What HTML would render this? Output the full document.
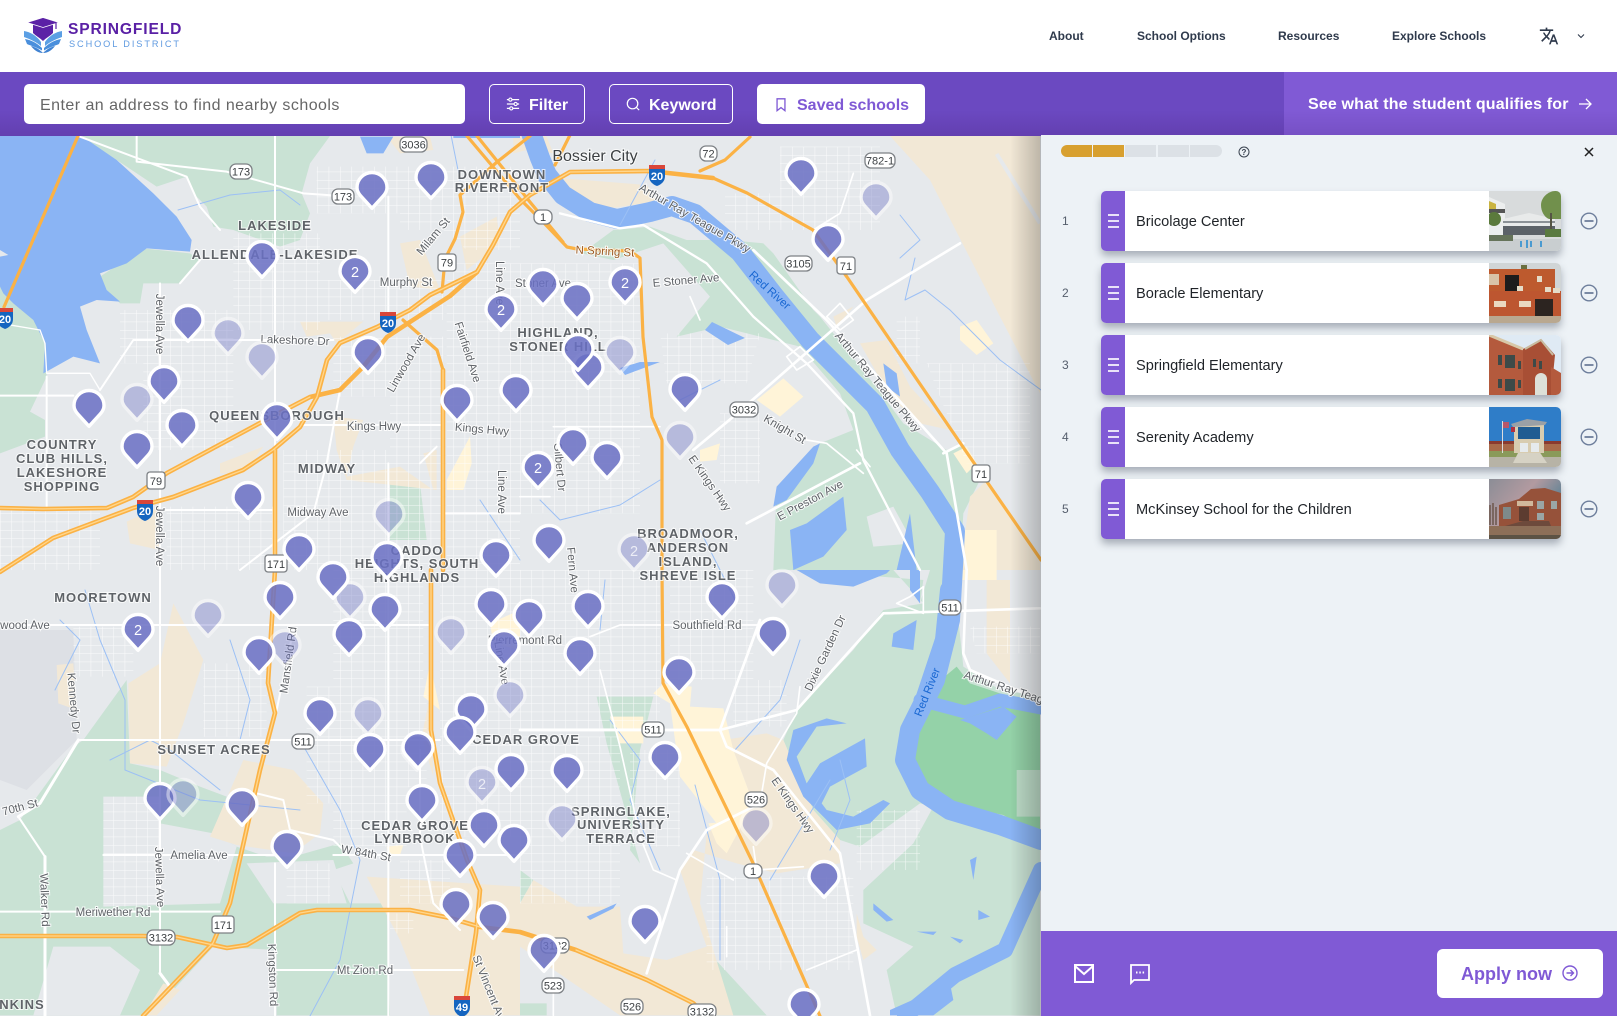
<!DOCTYPE html>
<html lang="en"><head><meta charset="utf-8"><title>Springfield School District</title>
<style>
*{box-sizing:border-box}
html,body{margin:0;padding:0}
body{width:1617px;height:1016px;overflow:hidden;position:relative;background:#fff;font-family:"Liberation Sans",sans-serif}
.abs{position:absolute}
.nav{position:absolute;top:29px;font-size:12px;font-weight:bold;color:#2f3a4c;line-height:14px;white-space:nowrap}
.tb{position:absolute;left:0;top:72px;width:1617px;height:64px;background:linear-gradient(#6b49c1 60%,#633fb0)}
.btn{position:absolute;top:12px;height:40px;border:1px solid #fff;border-radius:5px;color:#fff;font-size:16px;font-weight:bold;line-height:41px;white-space:nowrap}
.btn svg{position:absolute;top:12px}
.btn span{position:absolute;top:0}
.card{position:absolute;left:1101px;width:460px;height:60px;background:#fff;border-radius:5px;box-shadow:0 5px 8px rgba(55,65,85,.38)}
.card .h{position:absolute;left:0;top:0;width:24px;height:60px;background:#805ad5;border-radius:5px 0 0 5px}
.card .h i{position:absolute;left:7px;width:11px;height:1.6px;background:#e9e2f8}
.card .t{position:absolute;left:35px;top:1px;line-height:60px;font-size:14.6px;color:#1f2328;white-space:nowrap}
.card svg.im{position:absolute;left:388px;top:0;width:72px;height:60px;border-radius:0 5px 5px 0}
.num{position:absolute;left:1062px;font-size:12px;color:#555e6c;line-height:14px}
.mi{position:absolute;left:1580px}
.pl{font:bold 13px "Liberation Sans",sans-serif;letter-spacing:1px;fill:#5f6368;text-anchor:middle;paint-order:stroke;stroke:rgba(255,255,255,.75);stroke-width:2px}
.rl{font:11.5px "Liberation Sans",sans-serif;fill:#5f6368;text-anchor:middle;paint-order:stroke;stroke:rgba(255,255,255,.85);stroke-width:2px}
.sh{font:11px "Liberation Sans",sans-serif;fill:#3c4043;text-anchor:middle}
.sr{fill:#fff;stroke:#7d8185;stroke-width:1.3}
.it{font:bold 11px "Liberation Sans",sans-serif;fill:#fff;text-anchor:middle}
.f{opacity:.45}
.n{font:14.5px "Liberation Sans",sans-serif;fill:#fff;text-anchor:middle}
.nf{font:14.5px "Liberation Sans",sans-serif;fill:#fff;text-anchor:middle;opacity:.75}
</style></head><body>

<!-- map -->
<svg class="abs" style="left:0;top:135px" width="1041" height="881" viewBox="0 135 1041 881" xmlns="http://www.w3.org/2000/svg">
<defs>
<pattern id="g" patternUnits="userSpaceOnUse" width="34" height="25"><path d="M0 0H34M0 0V25" stroke="#fff" stroke-width="3.2" fill="none" opacity=".95"/></pattern>
<path id="p" d="M0 18.3L-11.2 6C-13.5 3.5-15-.0-15-2.5A15 15 0 0 1 15-2.5C15 0 13.500 3.5 11.2 6Z" fill="#6a70c4" fill-opacity=".86" stroke="#fff" stroke-width="3.4" stroke-linejoin="round"/>
<linearGradient id="sd" x1="0" x2="1" y1="0" y2="0"><stop offset="0" stop-color="#000" stop-opacity="0"/><stop offset="1" stop-color="#000" stop-opacity=".22"/></linearGradient>
</defs>
<rect x="0" y="135" width="1041" height="881" fill="#e6e9ec"/>

<!-- Q1 fills -->
<g transform="translate(0,130) scale(.33333)">
<path fill="#c9e2d4" d="M240 18L990 18 930 100 905 190 930 250 900 330 840 350 700 300 640 290 620 230 580 190 560 140 470 170 350 90Z"/>
<path fill="#c9e2d4" d="M300 440L430 355 570 370 600 390 540 460 430 460 420 520 360 520 320 480Z"/>
<path fill="#c9e2d4" d="M0 470L60 515 130 600 140 740 90 845 135 870 135 920 0 970Z"/>
<path fill="#c9e2d4" d="M1170 1050L1260 1060 1280 1230 1170 1230Z"/>
<path fill="#f2e8d6" d="M900 575L1090 575 1010 640 990 610 920 620ZM1000 860L1090 870 1060 950 1040 1040 1200 1010 1300 1080 1270 970 1310 960 1310 1080 1040 1050 1010 960ZM380 1175L480 1130 480 1260 390 1240ZM660 1000L790 950 730 1030 660 1030ZM1200 340L1260 330 1320 480 1230 470ZM1380 320L1490 260 1500 340 1400 420Z"/>
<path fill="#fff4d8" d="M1340 1050L1410 920 1415 1000 1390 1080 1340 1080Z"/>
<path fill="#f2e8d6" d="M1160 20L1290 20 1300 60 1200 70Z"/>
<path fill="url(#g)" d="M360 540H700V960H430V700H360ZM700 310H960V600H700ZM950 110H1200V250H950ZM840 450H1330V570H840ZM1000 620H1330V960H1170V800H1000ZM1200 110H1560V360H1400L1330 300H1200ZM1340 400H1560V1320H1340ZM0 1140H300V1320H0ZM500 1130H830V1320H500ZM850 960H1330V1320H850Z" opacity=".85"/>
</g>

<!-- Q2 fills -->
<g transform="translate(520,130) scale(.33333)">
<path fill="#f2e8d6" d="M1110 18H1560V790L1440 560 1230 150Z"/>
<path fill="none" stroke="#e6e9ec" stroke-width="12" d="M1430 72L1560 280"/>
<path fill="#f2e8d6" d="M130 145L380 165 410 215 230 240 150 190ZM0 30L80 20 100 70 40 60ZM-20 -10L90 -10 60 50 -20 70Z"/>
<path fill="#c9e2d4" d="M185 370L280 300 390 290 500 330 620 330 730 340 760 370 880 540 900 560 1060 760 1150 880 1280 960 1330 940 1380 1050 1330 1150 1320 1320H760L770 1070 900 940 1000 900 960 790 840 650 600 590 470 620 570 500 430 340 280 390Z"/>
<path fill="#e6e9ec" d="M800 680L880 730 930 880 760 850 720 790Z"/>
<path fill="#e6e9ec" d="M1040 1160L1120 1130 1180 1240 1060 1250Z"/>
<path fill="#f2e8d6" d="M940 560L1000 530 950 590ZM1020 640L1100 630 1170 770 1290 900 1200 880 1110 800ZM1350 1100L1400 1050 1560 1290V1320H1320Z"/>
<path fill="#fff4d8" d="M1320 590L1370 570 1420 640 1370 675 1320 630ZM710 810L790 745 850 800 780 860ZM1300 970L1340 950 1370 1000 1340 1030ZM1330 1200L1430 1200 1430 1320H1340ZM540 960L600 940 590 990 540 995Z"/>
<path fill="url(#g)" d="M0 400H360V1150H0ZM615 190H800V300H615ZM780 50H1080V300H780ZM1130 560H1200V700H1130ZM1220 700H1530V1000H1340ZM420 610H720L680 760H440ZM230 850H360V1060H130ZM600 850H720V1060H600Z" opacity=".85"/>
</g>

<!-- Q3 fills -->
<g transform="translate(0,570) scale(.33333)">
<path fill="#dde0e5" d="M0 180H220L230 510 80 660 0 630Z"/>
<path fill="#c9e2d4" d="M0 780L60 750 220 530 250 510 380 330 390 580 480 600 600 650 680 680 640 790 710 830 800 860 880 860 1020 820 1060 880 1000 900 1050 1000 1160 1000 1170 1336H0Z"/>
<path fill="#e6e9ec" d="M310 680H480V830H310ZM480 760L640 790 710 830 660 1000 310 1010V830H480ZM160 1130L330 1130 420 1200 360 1336H100ZM640 1130L830 1140 830 1336H450Z"/>
<path fill="#e6e9ec" d="M740 880L1000 870 1040 1000 820 1000Z"/>
<path fill="#f2e8d6" d="M385 340L480 280 520 100 610 270 550 460 500 590 390 580ZM630 800L730 570 880 600 970 700 960 790 880 850 710 825ZM170 285L220 280 230 420 175 400ZM1100 920L1560 950V1336H1290L1200 1110ZM430 1336L490 1240 540 1260 470 1336ZM1290 380L1300 620 1265 500Z"/>
<path fill="#fff4d8" d="M1470 160L1560 120V240L1480 220ZM1290 280L1320 420 1270 380ZM1160 830L1210 825 1200 855 1165 855Z"/>
<path fill="url(#g)" d="M220 170H400V320H220ZM1000 0H1270V480H1000ZM920 350H1280V640L1000 700H920ZM1000 620H1220V830H1000ZM1320 0H1560V800H1320ZM310 680H480V1010H310ZM610 280H800V500H610ZM860 880H990V1000H860ZM1200 870H1350V1000H1200ZM1170 1030H1240V1090H1170Z" opacity=".85"/>
</g>

<!-- Q4 fills -->
<g transform="translate(520,570) scale(.33333)">
<path fill="#c9e2d4" d="M830 0L1120 0 1210 100 1090 120 1000 240 830 420 790 510 880 720 960 810 1020 830 1200 700 1240 710 1180 820 1030 960 1030 1060 1180 1130 1100 1200 1130 1336H1560V380L1440 360 1330 290 1310 100 1320 0 1230 0 1200 100 1210 30ZM230 380L400 380 360 540 330 840 360 880 310 700 260 520Z"/>
<path fill="#c9e2d4" d="M0 900L40 930 0 1000ZM400 1190L560 1140 740 1336H480ZM0 1300H80V1336H0Z"/>
<path fill="#f2e8d6" d="M0 1000L40 930 170 1010 300 1010 310 1150 440 1170 560 1130 480 900 520 840 650 880 770 910 960 880 960 810 880 720 790 510 740 490 610 510 640 540 700 700 560 790 540 1000 580 1140 640 1336H300L0 1130Z"/>
<path fill="#f2e8d6" d="M1010 1030L1030 1100 1070 1140 1030 1170 1010 1100ZM1400 30H1470L1470 340 1400 250Z"/>
<path fill="#fff4d8" d="M400 370L430 340 515 350 510 410 610 415 640 540 700 700 620 850 590 760 480 620 450 400ZM270 440H370V520H300ZM1310 0H1430V30H1320ZM565 760L620 755 620 850 590 820Z"/>
<path fill="#94d2a8" d="M1200 410L1250 340 1310 290 1350 340 1440 370 1560 420V800L1450 735 1280 700 1190 620 1150 550Z"/>
<path fill="#bddcc8" d="M1490 600H1560V740H1490Z"/>
<path fill="url(#g)" d="M0 0H420V480H0ZM450 0H700V330H450ZM0 500H300V1000H0ZM560 920H1000V1200H560ZM640 330H800V470H640ZM1010 720H1200V900H1010ZM1350 170H1560V250H1370ZM330 540H480V830H330Z" opacity=".85"/>
</g>

<!-- water -->
<g fill="#8ab4f4">
<g transform="translate(0,130) scale(.33333)">
<path d="M0 18H245L350 90 460 190 530 260 575 330 570 365 440 355 380 400 300 430 320 480 360 515 290 510 240 530 260 600 300 700 220 680 130 730 135 640 100 570 40 520 10 490 0 470 0 380 25 375 0 360Z"/>
<path d="M1080 20H1180L1150 70 1100 70ZM1360 18H1560V24H1360Z"/>
</g>
<g transform="translate(520,570) scale(.33333)">
<path d="M820 480L800 570 850 680 950 780 1050 760 1110 700 1090 690 1000 740 920 720 905 700 930 650 1040 590 1035 505 900 580 860 640 830 560 890 470 980 460 920 445Z"/>
<path d="M830 0L900 40 1000 50 1100 10 1110 0ZM1170 0L1200 0 1200 100 1170 60ZM1120 190L1190 150 1180 240 1115 230ZM1320 450L1450 410 1490 440 1430 510 1400 490 1350 460ZM1060 1000L1120 1050 1100 1055 1060 1020ZM1350 870L1370 860 1360 930ZM1190 1085L1250 1085 1240 1095ZM1375 1020L1410 1040 1375 1050ZM1290 1100L1330 1110 1320 1120ZM200 1040L290 1000 280 1015 210 1050ZM1110 1320L1290 1240 1300 1290 1240 1336H1110Z"/>
</g>
<g transform="translate(520,130) scale(.33333)">
<path d="M760 1130L770 1070 880 950 900 940 880 1000 800 1110ZM860 1180L970 1100 980 1200 910 1280 820 1320 810 1200ZM1130 1320L1170 1150 1190 1320ZM1090 700L1130 730 1140 800 1100 770Z"/>
</g>
<path d="M705 330L712 322 745 338 728 345ZM620 368L640 362 660 362 625 375Z"/>
</g>
<g fill="none" stroke="#8ab4f4" stroke-linecap="round" stroke-linejoin="round">
<path stroke-width="20" d="M530 130L540 158 547 175 563 195 590 212 617 219 650 212 672 206 695 214 740 252 775 297 810 340 845 375 875 405 900 450 930 492 955 531 950 620 935 680 910 730 905 760 920 790 950 810 1000 825 1041 840"/>
<path stroke-width="20" d="M950 590L945 640 925 700"/>
<path stroke-width="16" d="M1041 870L1005 950 955 975 905 1016"/>
<path stroke-width="13" d="M1041 708L1000 700 965 712 920 700"/>
<path stroke-width="1" stroke="#9cc0f5" d="M178 210L230 195 280 190 300 205M620 225L655 160M900 258L920 240 900 215M915 258L905 300 925 290 950 310 1000 360 1041 390M450 130L460 180M720 380L680 400M700 530L720 570 735 600M800 640L780 700 735 750M610 720L640 760 630 800 660 870M695 785L720 880 720 960M55 690L80 640 60 620M110 760L150 740 170 750 220 790M85 590L100 640 125 700 125 770 200 800 300 810M230 640L250 700 240 740M300 740L340 810 360 860 340 960 310 1016M540 500L560 520 620 505 660 480M770 880L830 780M605 580L600 630M480 500L520 560M840 760L850 800 830 850"/>
</g>

<!-- white roads -->
<g fill="none" stroke="#fff" stroke-linecap="round" stroke-linejoin="round">
<g transform="translate(0,130) scale(.33333)" stroke-width="6">
<path d="M410 18V95L680 125 910 190 1050 200M825 18V960M240 20L560 140 600 230 660 300M0 797H220M140 740V1130M480 460V1320M300 780L400 630H1000M540 460L600 390M1165 1000V1320M1330 1150H1560M900 885H1320M480 1140H820M1165 200V560M1020 780L980 1000 940 1150 720 1320M1260 1000L1310 950"/>
<path d="M0 580L120 600 135 640 140 730 270 730 300 780" stroke-width="4"/>
</g>
<g transform="translate(520,130) scale(.33333)">
<path stroke-width="7" d="M120 250L300 295 370 285 560 400 700 560 860 700 1000 850 1030 990 1200 1320"/>
<path stroke-width="8" d="M700 360L920 570 1280 970 1340 1320M520 960L640 860 1040 510 1320 340M680 1180L1020 1000M1270 970L1330 940"/>
<path stroke-width="5" d="M920 560L960 520 1000 570 960 600ZM800 680L840 650 880 690 830 720ZM510 500L540 570M1010 960L1050 1010M860 930L920 940 1030 1030M100 890H420M0 1100H90M1000 130L960 250 880 300"/>
</g>
<g transform="translate(0,570) scale(.33333)">
<path stroke-width="6" d="M0 165H1290M235 510H1320M480 0V1210L510 1250M55 740L135 860V1336M825 880V1336M0 1025H660M310 855H830M1000 855H1560M830 1200H1390M1165 0V1336M1260 540V800L1300 1000 1380 1080M770 670L850 690 870 780 1000 810 1040 850M880 180L830 420"/>
<path stroke-width="9" d="M235 510L120 700 55 740M135 860V1336M480 1210L510 1250"/>
</g>
<g transform="translate(520,570) scale(.33333)">
<path stroke-width="8" d="M720 150L600 480 620 530 760 600 960 850 1050 1336M0 480H600L830 420 1090 130 1560 115M1340 0L1330 250 1350 300 1560 390M380 1210L480 900 560 780 700 710"/>
<path stroke-width="5" d="M840 350L830 430 740 580 720 700M210 200L300 165H720M240 300L300 530 360 800 400 900 470 930M860 1200L1010 1140M500 850L640 930M700 830L710 900 850 890M620 1070V1160M100 1150V1336M1130 100L1210 130V50L1170 80Z"/>
</g>
</g>

<!-- highways -->
<g fill="none" stroke-linecap="round" stroke-linejoin="round">
<g stroke="#fbb245" stroke-width="3.2">
<path d="M78 136L4 307"/>
<path d="M713 178L747 193 813 230 847 277 963 447 1041 560"/>
<path d="M577 249L630 251 640 258 643 337 652 417 662 440 662 570 663 683 687 727 753 863 820 1016"/>
<path d="M530 136L497 162 460 195 463 212 455 239 445 259 442 292"/>
<path d="M467 136L520 199 543 222 567 247 577 249M477 136L530 202 563 242M555 165L570 135M700 171L725 160 750 137"/>
<path d="M403 320L437 350 443 370"/>
</g>
<g stroke="#fbb245" stroke-width="4.6">
<path d="M0 572L53 538 133 508 173 497 243 470 273 450 300 427 317 397 327 360 340 343 377 327 410 310 430 295 477 272 493 245 510 212 530 195 570 172 650 171 713 178"/>
<path d="M0 508L43 509 107 508 133 497 167 473 260 423 310 397 340 390 363 367 387 337 413 320 450 296 477 272"/>
<path d="M275 450V570L268 683 275 713 260 770 230 903 213 943 143 1016"/>
<path d="M443 370V570M431 570V730L440 783 467 860 480 890 476 933 463 1016"/>
<path d="M0 936H143L177 937 227 948 247 945 300 913 317 910H410L450 918 480 927 520 932 576 950 647 980 693 1003 707 1016"/>
</g>
<g stroke="#ffd78e" stroke-width="1.3">
<path d="M0 572L53 538 133 508 173 497 243 470 273 450 300 427 317 397 327 360 340 343 377 327 410 310 430 295 477 272 493 245 510 212 530 195 570 172 650 171M275 450V570L268 683 275 713 260 770 230 903 213 943 143 1016M443 370V570M431 570V730L440 783 467 860 480 890 476 933 463 1016M0 936H143L177 937 227 948 247 945 300 913 317 910H410L450 918 480 927M576 950L647 980 693 1003M0 508L43 509 107 508 133 497 167 473 260 423 310 397"/>
</g>
</g>

<!-- labels -->
<g>
<text class="pl" x="275" y="230">LAKESIDE</text>
<text class="pl" x="275" y="259">ALLENDALE-LAKESIDE</text>
<text class="pl" x="502" y="179">DOWNTOWN</text>
<text class="pl" x="502" y="192">RIVERFRONT</text>
<text class="pl" x="62" y="449">COUNTRY</text>
<text class="pl" x="62" y="463">CLUB HILLS,</text>
<text class="pl" x="62" y="477">LAKESHORE</text>
<text class="pl" x="62" y="491">SHOPPING</text>
<text class="pl" x="277" y="420">QUEENSBOROUGH</text>
<text class="pl" x="327" y="473">MIDWAY</text>
<text class="pl" x="417" y="555">CADDO</text>
<text class="pl" x="417" y="568">HEIGHTS, SOUTH</text>
<text class="pl" x="417" y="582">HIGHLANDS</text>
<text class="pl" x="558" y="337">HIGHLAND,</text>
<text class="pl" x="558" y="351">STONER HILL</text>
<text class="pl" x="688" y="538">BROADMOOR,</text>
<text class="pl" x="688" y="552">ANDERSON</text>
<text class="pl" x="688" y="566">ISLAND,</text>
<text class="pl" x="688" y="580">SHREVE ISLE</text>
<text class="pl" x="103" y="602">MOORETOWN</text>
<text class="pl" x="214" y="754">SUNSET ACRES</text>
<text class="pl" x="526" y="744">CEDAR GROVE</text>
<text class="pl" x="415" y="830">CEDAR GROVE</text>
<text class="pl" x="415" y="843">LYNBROOK</text>
<text class="pl" x="621" y="816">SPRINGLAKE,</text>
<text class="pl" x="621" y="829">UNIVERSITY</text>
<text class="pl" x="621" y="843">TERRACE</text>
<text class="pl" x="22" y="1009">NKINS</text>
<text x="595" y="161" style="font:16px 'Liberation Sans',sans-serif;fill:#3c4043;text-anchor:middle;paint-order:stroke;stroke:rgba(255,255,255,.8);stroke-width:2px">Bossier City</text>

<text class="rl" x="406" y="286">Murphy St</text>
<text class="rl" x="295" y="344" transform="rotate(2 295 340)">Lakeshore Dr</text>
<text class="rl" x="374" y="430">Kings Hwy</text>
<text class="rl" x="482" y="433" transform="rotate(5 482 429)">Kings Hwy</text>
<text class="rl" x="318" y="516">Midway Ave</text>
<text class="rl" x="160" y="328" transform="rotate(90 160 324)">Jewella Ave</text>
<text class="rl" x="160" y="540" transform="rotate(90 160 536)">Jewella Ave</text>
<text class="rl" x="406" y="367" transform="rotate(-60 406 363)">Linwood Ave</text>
<text class="rl" x="468" y="356" transform="rotate(72 468 352)">Fairfield Ave</text>
<text class="rl" x="500" y="287" transform="rotate(90 500 283)">Line Ave</text>
<text class="rl" x="502" y="496" transform="rotate(90 502 492)">Line Ave</text>
<text class="rl" x="433" y="240" transform="rotate(-50 433 236)">Milam St</text>
<text class="rl" x="605" y="255" transform="rotate(3 605 251)" style="fill:#9c5a22">N Spring St</text>
<text class="rl" x="686" y="284" transform="rotate(-5 686 280)">E Stoner Ave</text>
<text class="rl" x="543" y="287">Stoner Ave</text>
<text class="rl" x="695" y="222" transform="rotate(30 695 218)">Arthur Ray Teague Pkwy</text>
<text class="rl" x="878" y="386" transform="rotate(50 878 382)">Arthur Ray Teague Pkwy</text>
<text class="rl" x="770" y="294" transform="rotate(42 770 290)" style="fill:#1967d2;stroke:none">Red River</text>
<text class="rl" x="785" y="433" transform="rotate(30 785 429)">Knight St</text>
<text class="rl" x="710" y="487" transform="rotate(55 710 483)">E Kings Hwy</text>
<text class="rl" x="810" y="504" transform="rotate(-28 810 500)">E Preston Ave</text>
<text class="rl" x="560" y="471" transform="rotate(85 560 467)">Gilbert Dr</text>
<text class="rl" x="573" y="574" transform="rotate(85 573 570)">Fern Ave</text>
<text class="rl" x="25" y="629">wood Ave</text>
<text class="rl" x="74" y="707" transform="rotate(85 74 703)">Kennedy Dr</text>
<text class="rl" x="160" y="881" transform="rotate(88 160 877)">Jewella Ave</text>
<text class="rl" x="45" y="904" transform="rotate(88 45 900)">Walker Rd</text>
<text class="rl" x="20" y="811" transform="rotate(-15 20 807)">70th St</text>
<text class="rl" x="199" y="859">Amelia Ave</text>
<text class="rl" x="113" y="916">Meriwether Rd</text>
<text class="rl" x="288" y="664" transform="rotate(-82 288 660)">Mansfield Rd</text>
<text class="rl" x="366" y="857" transform="rotate(10 366 853)">W 84th St</text>
<text class="rl" x="273" y="979" transform="rotate(88 273 975)">Kingston Rd</text>
<text class="rl" x="365" y="974">Mt Zion Rd</text>
<text class="rl" x="490" y="994" transform="rotate(68 490 990)">St Vincent Ave</text>
<text class="rl" x="525" y="644">Pierremont Rd</text>
<text class="rl" x="502" y="667" transform="rotate(80 502 663)">Line Ave</text>
<text class="rl" x="707" y="629">Southfield Rd</text>
<text class="rl" x="825" y="657" transform="rotate(-65 825 653)">Dixie Garden Dr</text>
<text class="rl" x="793" y="809" transform="rotate(55 793 805)">E Kings Hwy</text>
<text class="rl" x="927" y="696" transform="rotate(-68 927 692)" style="fill:#1967d2;stroke:none">Red River</text>
<text class="rl" x="1010" y="692" transform="rotate(18 1007 688)">Arthur Ray Teague</text>
</g>

<!-- shields -->
<g>
<rect class="sr" x="400" y="137" width="27" height="15" rx="6"/><text class="sh" x="413.500" y="148.500">3036</text>
<rect class="sr" x="230" y="164" width="22" height="15" rx="6"/><text class="sh" x="241" y="175.500">173</text>
<rect class="sr" x="332" y="189" width="22" height="15" rx="6"/><text class="sh" x="343" y="200.500">173</text>
<rect class="sr" x="438" y="254" width="18" height="17" rx="3"/><text class="sh" x="447" y="266.500">79</text>
<rect class="sr" x="147" y="472" width="18" height="17" rx="3"/><text class="sh" x="156" y="485">79</text>
<rect class="sr" x="265" y="555" width="22" height="17" rx="3"/><text class="sh" x="276" y="568">171</text>
<rect class="sr" x="700" y="146" width="17" height="15" rx="6"/><text class="sh" x="708.500" y="157.500">72</text>
<rect class="sr" x="865" y="153" width="30" height="15" rx="6"/><text class="sh" x="880" y="164.500">782-1</text>
<rect class="sr" x="534" y="210" width="18" height="14" rx="6"/><text class="sh" x="543" y="221">1</text>
<rect class="sr" x="785" y="256" width="27" height="15" rx="6"/><text class="sh" x="798.500" y="267.500">3105</text>
<rect class="sr" x="837" y="257" width="18" height="17" rx="3"/><text class="sh" x="846" y="270">71</text>
<rect class="sr" x="730" y="402" width="28" height="15" rx="6"/><text class="sh" x="744" y="413.500">3032</text>
<rect class="sr" x="972" y="465" width="18" height="17" rx="3"/><text class="sh" x="981" y="478">71</text>
<rect class="sr" x="292" y="734" width="22" height="15" rx="6"/><text class="sh" x="303" y="745.500">511</text>
<rect class="sr" x="147" y="930" width="28" height="15" rx="6"/><text class="sh" x="161" y="941.500">3132</text>
<rect class="sr" x="212" y="916" width="22" height="17" rx="3"/><text class="sh" x="223" y="929">171</text>
<rect class="sr" x="642" y="722" width="22" height="15" rx="6"/><text class="sh" x="653" y="733.500">511</text>
<rect class="sr" x="745" y="792" width="22" height="15" rx="6"/><text class="sh" x="756" y="803.500">526</text>
<rect class="sr" x="744" y="864" width="18" height="14" rx="6"/><text class="sh" x="753" y="875">1</text>
<rect class="sr" x="939" y="600" width="22" height="15" rx="6"/><text class="sh" x="950" y="611.500">511</text>
<rect class="sr" x="542" y="978" width="22" height="15" rx="6"/><text class="sh" x="553" y="989.500">523</text>
<rect class="sr" x="621" y="999" width="22" height="15" rx="6"/><text class="sh" x="632" y="1010.500">526</text>
<rect class="sr" x="688" y="1004" width="28" height="15" rx="6"/><text class="sh" x="702" y="1015.500">3132</text>
<rect class="sr" x="541" y="938" width="28" height="15" rx="6"/><text class="sh" x="555" y="949.500">3132</text>
<path fill="#1565c0" d="M380 313H396L396 323Q396 330 388 333 380 330 380 323Z"/><rect x="380" y="312" width="16" height="4" fill="#d9463a"/><text class="it" x="388" y="327">20</text>
<path fill="#1565c0" d="M-3 309H13L13 319Q13 326 5 329-3 326-3 319Z"/><rect x="-3" y="308" width="16" height="4" fill="#d9463a"/><text class="it" x="5" y="323">20</text>
<path fill="#1565c0" d="M137 501H153L153 511Q153 518 145 521 137 518 137 511Z"/><rect x="137" y="500" width="16" height="4" fill="#d9463a"/><text class="it" x="145" y="515">20</text>
<path fill="#1565c0" d="M649 166H665L665 176Q665 183 657 186 649 183 649 176Z"/><rect x="649" y="165" width="16" height="4" fill="#d9463a"/><text class="it" x="657" y="180">20</text>
<path fill="#1565c0" d="M454 997H470L470 1007Q470 1014 462 1017 454 1014 454 1007Z"/><rect x="454" y="996" width="16" height="4" fill="#d9463a"/><text class="it" x="462" y="1011">49</text>
</g>

<!-- pins -->
<g>
<use href="#p" x="372" y="190"/><use href="#p" x="431" y="180"/><use href="#p" x="262" y="259"/>
<use href="#p" x="355" y="274"/><text class="n" x="355" y="277">2</text>
<use href="#p" x="188" y="323"/><use href="#p" x="228" y="336" class="f"/><use href="#p" x="262" y="360" class="f"/>
<use href="#p" x="368" y="355"/><use href="#p" x="164" y="384"/><use href="#p" x="137" y="402" class="f"/>
<use href="#p" x="89" y="408"/><use href="#p" x="182" y="428"/><use href="#p" x="277" y="421"/><use href="#p" x="137" y="449"/>
<use href="#p" x="457" y="403"/><use href="#p" x="248" y="500"/><use href="#p" x="389" y="517" class="f"/>
<use href="#p" x="299" y="552"/><use href="#p" x="387" y="560"/><use href="#p" x="496" y="558"/>
<use href="#p" x="501" y="312"/><text class="n" x="501" y="315">2</text>
<use href="#p" x="516" y="393"/>
<use href="#p" x="801" y="176"/><use href="#p" x="876" y="200" class="f"/><use href="#p" x="828" y="242"/>
<use href="#p" x="543" y="287"/><use href="#p" x="577" y="301"/>
<use href="#p" x="625" y="285"/><text class="n" x="625" y="288">2</text>
<use href="#p" x="588" y="370"/><use href="#p" x="620" y="355" class="f"/><use href="#p" x="578" y="352"/>
<use href="#p" x="685" y="392"/><use href="#p" x="680" y="440" class="f"/><use href="#p" x="573" y="446"/><use href="#p" x="607" y="460"/>
<use href="#p" x="538" y="470"/><text class="n" x="538" y="473">2</text>
<use href="#p" x="549" y="543"/>
<use href="#p" x="634" y="552" class="f"/><text class="nf" x="634" y="556">2</text>
<use href="#p" x="350" y="600" class="f"/><use href="#p" x="333" y="580"/>
<use href="#p" x="280" y="600"/><use href="#p" x="385" y="612"/><use href="#p" x="491" y="607"/>
<use href="#p" x="138" y="632"/><text class="n" x="138" y="635">2</text>
<use href="#p" x="208" y="618" class="f"/><use href="#p" x="285" y="648" class="f"/><use href="#p" x="259" y="655"/>
<use href="#p" x="349" y="637"/><use href="#p" x="451" y="635" class="f"/><use href="#p" x="504" y="648"/>
<use href="#p" x="529" y="618"/><use href="#p" x="588" y="609"/><use href="#p" x="722" y="600"/><use href="#p" x="782" y="588" class="f"/>
<use href="#p" x="580" y="656"/><use href="#p" x="773" y="636"/><use href="#p" x="679" y="675"/>
<use href="#p" x="510" y="698" class="f"/>
<use href="#p" x="320" y="716"/><use href="#p" x="368" y="716" class="f"/><use href="#p" x="471" y="712"/><use href="#p" x="460" y="735"/>
<use href="#p" x="370" y="752"/><use href="#p" x="417" y="752" class="f"/><use href="#p" x="418" y="750"/>
<use href="#p" x="665" y="760"/><use href="#p" x="567" y="773"/><use href="#p" x="511" y="772"/>
<use href="#p" x="482" y="785" class="f"/><text class="nf" x="482" y="789">2</text>
<use href="#p" x="160" y="801"/><use href="#p" x="183" y="797" class="f"/><use href="#p" x="242" y="807"/>
<use href="#p" x="422" y="803"/><use href="#p" x="562" y="822" class="f"/><use href="#p" x="756" y="826" class="f"/>
<use href="#p" x="484" y="828"/><use href="#p" x="514" y="843"/><use href="#p" x="287" y="849"/><use href="#p" x="460" y="858"/>
<use href="#p" x="824" y="879"/><use href="#p" x="456" y="907"/><use href="#p" x="493" y="920"/><use href="#p" x="645" y="924"/>
<use href="#p" x="544" y="953"/><use href="#p" x="804" y="1007"/>
</g>
<rect x="1010" y="135" width="31" height="881" fill="url(#sd)"/>
</svg>

<!-- header -->
<div class="abs" style="left:0;top:0;width:1617px;height:72px;background:#fff"></div>
<svg class="abs" style="left:22px;top:15px" width="42" height="40" viewBox="0 0 42 40">
<path fill="#5b9fe4" d="M2 16C8 17 14 20 19 27L19 31C13 26 7 24 2 22Z"/>
<path fill="#4a8fdc" d="M3 24C9 25 15 28 20 33L20 35.500C14 32 8 30.500 5 29Z"/>
<path fill="#3f82d2" d="M9 31C13 32 17 34 21 38 16 38 12 35 9 31Z"/>
<path fill="#5b9fe4" d="M40 16C34 17 28 20 23 27L23 31C29 26 35 24 40 22Z"/>
<path fill="#4a8fdc" d="M39 24C33 25 27 28 22 33L22 35.500C28 32 34 30.500 37 29Z"/>
<path fill="#3f82d2" d="M33 31C29 32 25 34 21 38 26 38 30 35 33 31Z"/>
<path fill="#5b21a6" d="M11 9V18C14 21 18 23 21 26 24 23 28 21 31 18V9Z"/>
<path fill="#5b21a6" stroke="#fff" stroke-width=".8" d="M21 2.500L37 7.500 21 12.500 5 7.500Z"/>
<path stroke="#5b21a6" stroke-width="1.200" d="M34 8V14"/>
</svg>
<div class="abs" style="left:68px;top:21px;font-size:15.6px;font-weight:bold;letter-spacing:.85px;color:#5a20a5;line-height:18px;white-space:nowrap">SPRINGFIELD</div>
<div class="abs" style="left:69px;top:39px;font-size:9.2px;letter-spacing:1.9px;color:#5f9ae0;line-height:11px;white-space:nowrap">SCHOOL DISTRICT</div>
<div class="nav" style="left:1049px">About</div>
<div class="nav" style="left:1137px">School Options</div>
<div class="nav" style="left:1278px">Resources</div>
<div class="nav" style="left:1392px">Explore Schools</div>
<svg class="abs" style="left:1539px;top:26px" width="20" height="20" viewBox="0 0 24 24"><path fill="#2f3a4c" d="M12.87 15.07l-2.54-2.51.03-.03c1.74-1.94 2.98-4.17 3.71-6.53H17V4h-7V2H8v2H1v1.99h11.17C11.5 7.92 10.44 9.75 9 11.35 8.07 10.32 7.3 9.19 6.69 8h-2c.73 1.63 1.73 3.17 2.98 4.56l-5.09 5.02L4 19l5-5 3.11 3.11.76-2.04zM18.5 10h-2L12 22h2l1.12-3h4.75L21 22h2l-4.5-12zm-2.62 7l1.62-4.33L19.12 17h-3.24z"/></svg>
<svg class="abs" style="left:1577px;top:32px" width="8" height="8" viewBox="0 0 8 8"><path d="M1 2.500L4 5.500 7 2.500" fill="none" stroke="#2f3a4c" stroke-width="1.100"/></svg>

<!-- toolbar -->
<div class="tb">
<div class="abs" style="left:24px;top:12px;width:441px;height:40px;background:#fff;border-radius:5px;color:#666;font-size:16px;letter-spacing:.46px;line-height:43px;padding-left:16px;white-space:nowrap">Enter an address to find nearby schools</div>
<div class="btn" style="left:489px;width:96px"><svg style="left:16px" width="14" height="14" viewBox="0 0 16 16" fill="none" stroke="#fff" stroke-width="1.300"><path d="M1 3H15M1 8H15M1 13H15"/><circle cx="5" cy="3" r="1.800" fill="#6b49c1"/><circle cx="11" cy="8" r="1.800" fill="#6b49c1"/><circle cx="6" cy="13" r="1.800" fill="#6b49c1"/></svg><span style="left:39px">Filter</span></div>
<div class="btn" style="left:609px;width:124px"><svg style="left:16px" width="14" height="14" viewBox="0 0 16 16" fill="none" stroke="#fff" stroke-width="1.400"><circle cx="7.500" cy="7.500" r="6"/><path d="M12 12L15 15"/></svg><span style="left:39px">Keyword</span></div>
<div class="btn" style="left:757px;width:168px;background:#fff;color:#7f59d5"><svg style="left:16px" width="14" height="15" viewBox="0 0 16 16" fill="none" stroke="#7f59d5" stroke-width="1.500"><path d="M3.500 1.500H12.500V15L8 11.500 3.500 15Z"/></svg><span style="left:39px">Saved schools</span></div>
<div class="abs" style="left:1284px;top:0;width:333px;height:64px;background:linear-gradient(#805ad5 60%,#7650c4)"></div>
<div class="abs" style="left:1308px;top:1px;line-height:64px;color:#fff;font-size:16px;font-weight:bold;letter-spacing:.16px;white-space:nowrap">See what the student qualifies for</div>
<svg class="abs" style="left:1578px;top:25px" width="14" height="14" viewBox="0 0 14 14" fill="none" stroke="#fff" stroke-width="1.300"><path d="M1 7H13M8 2L13 7 8 12"/></svg>
</div>

<!-- panel -->
<div class="abs" style="left:1041px;top:135px;width:576px;height:796px;background:#edf2f6"></div>
<div class="abs" style="left:1061px;top:145px;width:161px;height:12px;border-radius:6px;overflow:hidden;background:#edf2f6">
<div class="abs" style="left:0;top:0;width:31px;height:12px;background:#d8a02f"></div>
<div class="abs" style="left:32px;top:0;width:31px;height:12px;background:#d8a02f"></div>
<div class="abs" style="left:64px;top:0;width:31px;height:12px;background:#dce1e6"></div>
<div class="abs" style="left:97px;top:0;width:31px;height:12px;background:#dce1e6"></div>
<div class="abs" style="left:129px;top:0;width:32px;height:12px;background:#dce1e6"></div>
</div>
<svg class="abs" style="left:1238px;top:146px" width="12" height="12" viewBox="0 0 12 12"><circle cx="6" cy="6" r="5" fill="none" stroke="#3a4350" stroke-width="1"/><text x="6" y="8.800" font-size="8" font-weight="bold" text-anchor="middle" fill="#3a4350" font-family="Liberation Sans">?</text></svg>
<svg class="abs" style="left:1584px;top:147px" width="10" height="10" viewBox="0 0 10 10"><path d="M1 1L9 9M9 1L1 9" stroke="#222" stroke-width="1.500"/></svg>

<div class="num" style="top:214px">1</div>
<div class="card" style="top:191px"><div class="h"><i style="top:23px"></i><i style="top:29px"></i><i style="top:35px"></i></div><div class="t">Bricolage Center</div>
<svg class="im" viewBox="0 0 72 60" preserveAspectRatio="none"><rect width="72" height="60" fill="#d8dbdc"/><rect y="48" width="72" height="12" fill="#c9ced0"/><path d="M0 6L16 13V46H0Z" fill="#eceeee"/><path d="M0 18H16V22H0Z" fill="#555"/><path d="M0 10L7 13V18H0Z" fill="#c9b340"/><path d="M14 28L40 22 66 28V44H14Z" fill="#e8eaea"/><rect x="14" y="35" width="52" height="9" fill="#5c6268"/><rect x="14" y="30" width="52" height="2" fill="#8b9196"/><circle cx="5" cy="28" r="7" fill="#5b7a3c"/><path d="M52 14C52 6 60 0 66 0H72V28H60C55 26 52 20 52 14Z" fill="#71904c"/><rect x="61" y="22" width="2" height="20" fill="#554"/><rect x="0" y="44" width="24" height="6" fill="#66745a"/><rect x="56" y="38" width="16" height="8" fill="#5a7a40"/><path d="M32 50v6M38 49v8M42 50v6M52 50v6" stroke="#4a9ad0" stroke-width="2"/></svg></div>
<svg class="mi" style="top:212px" width="18" height="18" viewBox="0 0 18 18" fill="none" stroke="#6e7f9c" stroke-width="1.400"><circle cx="9" cy="9" r="7.800"/><path d="M4.500 9H13.500" stroke-width="1.800"/></svg>

<div class="num" style="top:286px">2</div>
<div class="card" style="top:263px"><div class="h"><i style="top:23px"></i><i style="top:29px"></i><i style="top:35px"></i></div><div class="t">Boracle Elementary</div>
<svg class="im" viewBox="0 0 72 60" preserveAspectRatio="none"><rect width="72" height="60" fill="#d0d5d6"/><rect x="0" y="6" width="66" height="22" fill="#bd5a2e"/><rect x="0" y="28" width="72" height="26" fill="#bd5630"/><rect x="32" y="2" width="6" height="4" fill="#6a7040"/><rect x="16" y="12" width="14" height="16" fill="#1c1c1c"/><rect x="0" y="11" width="10" height="11" fill="#d8c4a8"/><rect x="48" y="13" width="5" height="6" fill="#e4dcc8"/><rect x="28" y="23" width="6" height="5" fill="#e4dcc8"/><rect x="56" y="24" width="6" height="5" fill="#e4dcc8"/><rect x="64" y="25" width="7" height="5" fill="#e4dcc8"/><rect x="5" y="38" width="12" height="6" fill="#ead8c0"/><rect x="30" y="38" width="12" height="6" fill="#ead8c0"/><rect x="46" y="36" width="18" height="17" fill="#2c2420"/><rect y="53" width="72" height="7" fill="#b9a890"/></svg></div>
<svg class="mi" style="top:284px" width="18" height="18" viewBox="0 0 18 18" fill="none" stroke="#6e7f9c" stroke-width="1.400"><circle cx="9" cy="9" r="7.800"/><path d="M4.500 9H13.500" stroke-width="1.800"/></svg>

<div class="num" style="top:358px">3</div>
<div class="card" style="top:335px"><div class="h"><i style="top:23px"></i><i style="top:29px"></i><i style="top:35px"></i></div><div class="t">Springfield Elementary</div>
<svg class="im" viewBox="0 0 72 60" preserveAspectRatio="none"><rect width="72" height="60" fill="#dfeaf4"/><path d="M0 0L34 15 38 60H0Z" fill="#b45a3d"/><path d="M0 0L34 14" stroke="#d8c8a8" stroke-width="3"/><path d="M34 14L52 4 66 20 62 60H34Z" fill="#a84f35"/><path d="M36 14L52 5 64 20" stroke="#c8bca0" stroke-width="2" fill="none"/><path d="M62 32L72 38V60H62Z" fill="#b45a3d"/><rect x="9" y="20" width="4" height="10" fill="#3d4a48"/><rect x="16" y="20" width="10" height="13" fill="#3d4a48"/><rect x="29" y="26" width="3" height="8" fill="#3d4a48"/><rect x="9" y="44" width="4" height="9" fill="#3d4a48"/><rect x="16" y="44" width="10" height="12" fill="#3d4a48"/><rect x="29" y="45" width="3" height="8" fill="#3d4a48"/><rect x="44" y="24" width="3" height="8" fill="#3d4a48"/><rect x="50" y="26" width="3" height="8" fill="#3d4a48"/><path d="M46 60V44A6 6 0 0 1 58 44V60Z" fill="#dde0d8"/></svg></div>
<svg class="mi" style="top:356px" width="18" height="18" viewBox="0 0 18 18" fill="none" stroke="#6e7f9c" stroke-width="1.400"><circle cx="9" cy="9" r="7.800"/><path d="M4.500 9H13.500" stroke-width="1.800"/></svg>

<div class="num" style="top:430px">4</div>
<div class="card" style="top:407px"><div class="h"><i style="top:23px"></i><i style="top:29px"></i><i style="top:35px"></i></div><div class="t">Serenity Academy</div>
<svg class="im" viewBox="0 0 72 60" preserveAspectRatio="none"><rect width="72" height="36" fill="#2f7dc8"/><rect y="34" width="72" height="14" fill="#a96a4a"/><rect y="34" width="72" height="3" fill="#8a3a30"/><rect y="44" width="72" height="6" fill="#8a9a5a"/><rect y="50" width="72" height="10" fill="#b7b3a6"/><path d="M24 56L30 44H50L58 56Z" fill="#d6d2c4"/><rect x="25" y="16" width="30" height="30" fill="#d8ccb0"/><path d="M22 17L38 12 58 15 56 18 24 20Z" fill="#9aa0a6"/><rect x="29" y="20" width="22" height="12" fill="#1f5c92"/><rect x="31" y="36" width="8" height="9" fill="#e6eaec"/><rect x="42" y="36" width="8" height="9" fill="#e6eaec"/><rect x="13" y="14" width="1" height="32" fill="#ddd"/><rect x="14" y="15" width="6" height="6" fill="#b6566a"/><rect x="22" y="20" width="4" height="5" fill="#b03040"/></svg></div>
<svg class="mi" style="top:428px" width="18" height="18" viewBox="0 0 18 18" fill="none" stroke="#6e7f9c" stroke-width="1.400"><circle cx="9" cy="9" r="7.800"/><path d="M4.500 9H13.500" stroke-width="1.800"/></svg>

<div class="num" style="top:502px">5</div>
<div class="card" style="top:479px"><div class="h"><i style="top:23px"></i><i style="top:29px"></i><i style="top:35px"></i></div><div class="t">McKinsey School for the Children</div>
<svg class="im" viewBox="0 0 72 60" preserveAspectRatio="none"><defs><linearGradient id="sk" x1="0" y1="0" x2="1" y2=".6"><stop offset="0" stop-color="#8b8d96"/><stop offset=".5" stop-color="#b29aa0"/><stop offset="1" stop-color="#4d7d92"/></linearGradient></defs><rect width="72" height="50" fill="url(#sk)"/><path d="M10 26L30 20 42 10 56 9 72 14V47H10Z" fill="#96523a"/><rect x="28" y="22" width="16" height="5" fill="#d0b89c"/><rect x="14" y="28" width="8" height="12" fill="#7e8a8a"/><rect x="30" y="28" width="10" height="14" fill="#5c3c30"/><rect x="48" y="22" width="7" height="8" fill="#9aa6a6"/><rect x="48" y="34" width="7" height="7" fill="#9aa6a6"/><rect x="62" y="22" width="6" height="8" fill="#9aa6a6"/><path d="M16 47L34 42H60L62 47Z" fill="#6d4a3c"/><rect y="47" width="72" height="13" fill="#8d6f58"/><rect y="56" width="72" height="4" fill="#5c5244"/><path d="M1 46V26M4 46V24M7 46V28" stroke="#7a6660" stroke-width="2"/></svg></div>
<svg class="mi" style="top:500px" width="18" height="18" viewBox="0 0 18 18" fill="none" stroke="#6e7f9c" stroke-width="1.400"><circle cx="9" cy="9" r="7.800"/><path d="M4.500 9H13.500" stroke-width="1.800"/></svg>

<!-- footer -->
<div class="abs" style="left:1041px;top:931px;width:576px;height:85px;background:#805ad5"></div>
<svg class="abs" style="left:1073px;top:963px" width="22" height="21" viewBox="0 0 22 21" fill="none" stroke="#fff" stroke-width="2"><rect x="2" y="2" width="18" height="17"/><path d="M2 3L11 11 20 3"/></svg>
<svg class="abs" style="left:1129px;top:963px" width="22" height="22" viewBox="0 0 22 22" fill="none" stroke="#fff" stroke-width="1.800"><path d="M2 2H20V17H5L2 20Z"/><path d="M7 9.500H8.500M10.300 9.500H11.800M13.600 9.500H15.100" stroke-width="2"/></svg>
<div class="abs" style="left:1437px;top:949px;width:166px;height:49px;background:#fff;border-radius:6px"></div>
<div class="abs" style="left:1461px;top:950px;line-height:49px;color:#7f59d5;font-size:18px;font-weight:bold;white-space:nowrap">Apply now</div>
<svg class="abs" style="left:1562px;top:965px" width="16" height="16" viewBox="0 0 16 16" fill="none" stroke="#7f59d5" stroke-width="1.400"><circle cx="8" cy="8" r="7"/><path d="M4.500 8H11.500M8.500 5L11.500 8 8.500 11"/></svg>
</body></html>
